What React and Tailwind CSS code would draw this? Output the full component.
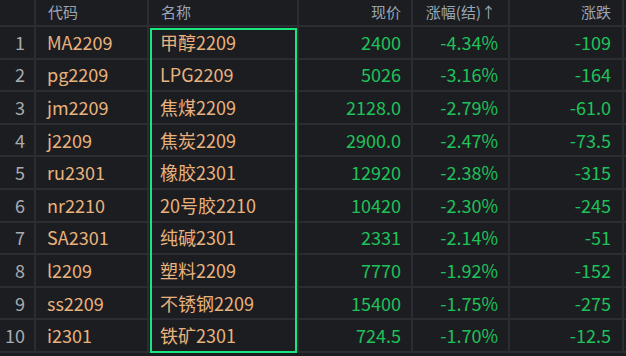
const rows = [
  ["1", "MA2209", "甲醇2209", "2400", "-4.34%", "-109"],
  ["2", "pg2209", "LPG2209", "5026", "-3.16%", "-164"],
  ["3", "jm2209", "焦煤2209", "2128.0", "-2.79%", "-61.0"],
  ["4", "j2209", "焦炭2209", "2900.0", "-2.47%", "-73.5"],
  ["5", "ru2301", "橡胶2301", "12920", "-2.38%", "-315"],
  ["6", "nr2210", "20号胶2210", "10420", "-2.30%", "-245"],
  ["7", "SA2301", "纯碱2301", "2331", "-2.14%", "-51"],
  ["8", "l2209", "塑料2209", "7770", "-1.92%", "-152"],
  ["9", "ss2209", "不锈钢2209", "15400", "-1.75%", "-275"],
  ["10", "i2301", "铁矿2301", "724.5", "-1.70%", "-12.5"],
];

const cols = "grid grid-cols-[36px_113px_150px_114px_97px_114px_2px]";
const cell = "border-r-2 border-[#2b2d32] flex items-center";

export default function App() {
  return (
    <div
      className="relative w-[626px] h-[356px] overflow-hidden bg-[#1c1d21]"
      style={{ fontFamily: '"Microsoft YaHei", "Noto Sans CJK SC", sans-serif' }}
    >
      <div className={`${cols} h-[27px] border-b-2 border-[#2b2d32] text-[15px] text-[#9aa6b6]`}>
        <div className={cell}></div>
        <div className={`${cell} pl-3`}>代码</div>
        <div className={`${cell} pl-3`}>名称</div>
        <div className={`${cell} justify-end pr-[10px]`}>现价</div>
        <div className={`${cell} justify-end pr-[12px]`}>涨幅(结)↑</div>
        <div className={`${cell} justify-end pr-[11px]`}>涨跌</div>
        <div></div>
      </div>
      {rows.map((r) => (
        <div
          key={r[0]}
          className={`${cols} h-[32.6px] border-b-2 border-[#2b2d32] text-[18px]`}
        >
          <div className={`${cell} justify-end pr-[9px] text-[#a9abaf]`}>{r[0]}</div>
          <div className={`${cell} pl-[11px] text-[#e9b27c]`}>{r[1]}</div>
          <div className={`${cell} pl-[11px] text-[#e9b27c]`}>{r[2]}</div>
          <div className={`${cell} justify-end pr-[10px] text-[#1ec25a]`}>{r[3]}</div>
          <div className={`${cell} justify-end pr-[10px] text-[#1ec25a]`}>{r[4]}</div>
          <div className={`${cell} justify-end pr-[11px] text-[#1ec25a]`}>{r[5]}</div>
          <div></div>
        </div>
      ))}
      <div className="absolute left-[150px] top-[28px] w-[147px] h-[325px] border-2 border-[#19e67c]"></div>
    </div>
  );
}
